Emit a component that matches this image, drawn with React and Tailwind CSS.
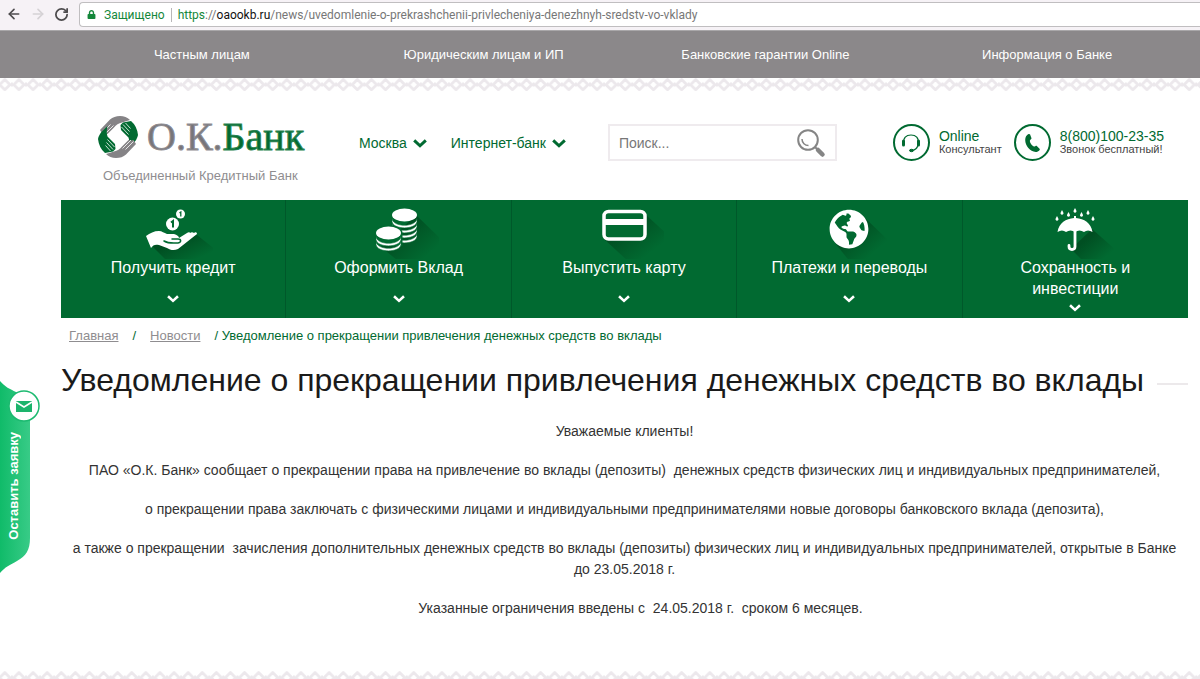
import React from 'react';
import { FaGlobeAmericas, FaLock } from 'react-icons/fa';
import { ArrowLeft, ArrowRight, RotateCw } from 'lucide-react';

const TOP_LINKS = ['Частным лицам', 'Юридическим лицам и ИП', 'Банковские гарантии Online', 'Информация о Банке'];

const Chevron = ({ className }) => (
    <svg viewBox="0 0 14 9" className={className} fill="none" stroke="currentColor" strokeWidth="3" aria-hidden="true">
        <path d="M1.2 1.4 7 6.8l5.8-5.4" />
    </svg>
);

const Ornament = ({ id, className }) => (
    <svg className={`block w-full ${className}`} aria-hidden="true">
        <defs>
            <pattern id={id} width="14.1" height="14" x="-2.2" patternUnits="userSpaceOnUse">
                <path d="M7.05 1.6 12.2 6.7l-5.150 5.1L1.900 6.7z" fill="none" stroke="#ece8ec" strokeWidth="2.800" strokeLinejoin="round" />
                <path d="M0 4.500v4M14.100 4.500v4" stroke="#ece8ec" strokeWidth="2" />
            </pattern>
        </defs>
        <rect width="100%" height="100%" fill={`url(#${id})`} />
    </svg>
);

const Shadow = ({ id, points }) => (
    <>
        <defs>
            <linearGradient id={id} x1="0" y1="0" x2="1" y2="1">
                <stop offset="0.3" stopColor="#00461d" stopOpacity="0.75" />
                <stop offset="0.75" stopColor="#00461d" stopOpacity="0" />
            </linearGradient>
        </defs>
        <polygon points={points} fill={`url(#${id})`} />
    </>
);

const HandIcon = () => (
    <svg viewBox="0 0 80 54" className="w-20 h-[54px]" aria-hidden="true">
        <Shadow id="sh-hand" points="19,41 64,30 84,46 70,60 38,60" />
        <path d="M13 31c4-3 8-5 13-5 3 0 5 2 8 3h7c3 1 5 2 5 4l8-5c1-1 3-1 3 0 1-1 3-1 4 0 1-1 3-1 3 1L45 44c-4 2-8 1-11-1l-8-3c-4-1-6 0-8 3z" fill="#fff" />
        <path d="M31 36c5 3 10 2 14 2 4-1 3-4 0-4h-6" fill="none" stroke="#016a31" strokeWidth="1.5" strokeLinecap="round" />
        <circle cx="39.500" cy="19" r="6.500" fill="#fff" />
        <path d="M38 17.500l2-1.500v6.500" fill="none" stroke="#016a31" strokeWidth="2" />
        <circle cx="47.500" cy="9" r="4.500" fill="#fff" />
        <path d="M46.500 8l1.300-1v4.500" fill="none" stroke="#016a31" strokeWidth="1.300" />
    </svg>
);

const CoinStack = ({ x, y, layers }) => (
    <g transform={`translate(${x} ${y})`}>
        {layers.map((dy) => (
            <path key={dy} d={`M-12.500 ${dy - 2.500}c1 9 24 9 25 0v3c-1 8.500-24 8.500-25 0z`} fill="#fff" stroke="#016a31" strokeWidth=".6" />
        ))}
        <ellipse rx="12.500" ry="6.500" fill="#fff" />
    </g>
);

const CoinsIcon = () => (
    <svg viewBox="0 0 80 54" className="w-20 h-[54px]" aria-hidden="true">
        <Shadow id="sh-coins" points="22,42 57,10 84,36 60,64 44,60" />
        <CoinStack x={45.5} y={10} layers={[6, 11, 16, 21]} />
        <ellipse cx="29.500" cy="28" rx="14" ry="8" fill="#016a31" />
        <path d="M15.500 28h28v13h-28z" fill="#016a31" />
        <CoinStack x={29.5} y={28} layers={[6, 11]} />
    </svg>
);

const CardIcon = () => (
    <svg viewBox="0 0 80 54" className="w-20 h-[54px]" aria-hidden="true">
        <Shadow id="sh-card" points="20,34 60,8 86,32 70,58 46,58" />
        <rect x="20" y="6.500" width="41" height="27.500" rx="4.500" fill="#016a31" stroke="#fff" strokeWidth="3.500" />
        <path d="M20 17h41" stroke="#fff" strokeWidth="6" />
    </svg>
);

const GlobeIcon = () => (
    <svg viewBox="0 0 80 54" className="w-20 h-[54px]" aria-hidden="true">
        <Shadow id="sh-globe" points="26,38 54,11 80,36 66,58 42,58" />
        <circle cx="40" cy="24" r="18.500" fill="#016a31" />
        <FaGlobeAmericas x="20" y="4" size={40} color="#fff" />
    </svg>
);

const DROPS = [[22, 12], [27, 6], [33.5, 8], [40, 4], [46.5, 8], [53, 6], [58, 12]];

const UmbrellaIcon = () => (
    <svg viewBox="0 0 80 54" className="w-20 h-[54px]" aria-hidden="true">
        <Shadow id="sh-umbrella" points="36,44 57,24 82,46 66,62 50,58" />
        {DROPS.map(([x, y]) => (
            <path key={x} d={`M${x} ${y - 1}l1.300 2.400a1.500 1.500 0 1 1-2.600 0z`} fill="#fff" />
        ))}
        <path d="M22.500 27C24 18 31 13.500 39 13v-2h2v2c8 .5 15 5 16.500 14-3-2-6-2-8.500 0-3-2-6-2-9 0-3-2-6-2-9 0-2.500-2-5.500-2-8.500 0z" fill="#fff" />
        <path d="M40 25v16.500c0 4-6 4-6 0v-1" fill="none" stroke="#fff" strokeWidth="2.800" strokeLinecap="round" />
    </svg>
);

const SERVICES = [
    { title: 'Получить кредит', Icon: HandIcon },
    { title: 'Оформить Вклад', Icon: CoinsIcon },
    { title: 'Выпустить карту', Icon: CardIcon },
    { title: 'Платежи и переводы', Icon: GlobeIcon },
    { title: 'Сохранность и инвестиции', Icon: UmbrellaIcon },
];

const BrowserBar = () => (
    <div className="flex h-[31px] items-start border-b border-[#a9a7a9] bg-[#f6f2f6] pt-[2px]">
        <div className="flex h-6 w-[79px] shrink-0 items-center gap-2 pl-[6px] text-[#4d4b4d]">
            <button aria-label="Назад"><ArrowLeft size={16} strokeWidth={2.5} /></button>
            <button aria-label="Вперёд" className="text-[#d5d2d5]"><ArrowRight size={16} strokeWidth={2.5} /></button>
            <button aria-label="Обновить"><RotateCw size={15} strokeWidth={2.8} /></button>
        </div>
        <div className="flex h-[25px] flex-1 items-center rounded-l-sm border border-r-0 border-[#c0bec0] bg-white pl-[7px] font-[Roboto,sans-serif] text-xs whitespace-nowrap">
            <FaLock className="mr-2 text-[#14873a]" size={9} />
            <span className="text-[#14873a]">Защищено</span>
            <span className="mx-[6px] h-[14px] w-px bg-[#b9b7b9]" />
            <span className="text-[#777]">
                <span className="text-[#14873a]">https</span>://<span className="text-[#111]">oaookb.ru</span>/news/uvedomlenie-o-prekrashchenii-privlecheniya-denezhnyh-sredstv-vo-vklady
            </span>
        </div>
    </div>
);

// one half of the emblem, the other half is the same shape turned by 180 degrees
const LogoHalf = () => (
    <>
        <path d="M3 14 13 3.500Q17 0 23 0q6 0 10 4l-8 2.500q-5 1-8 5L10.500 18 8 17.500 5.500 18z" fill="#858386" />
        <path d="M23.500 9 26 6.500 34 5q6 5 7 14-1 5-5 8.500L31.500 32q1.500-6 0-10.500L24 14z" fill="#016a31" />
        <path d="m5.500 16.500 8-8M8 18l8.500-8.500M24.500 11l7 7.500M26 8.500l6.500 7M28.500 7l5 5.500" stroke="#fff" strokeWidth=".8" />
    </>
);

const LogoMark = () => (
    <svg viewBox="0 0 42 42" className="size-[42px]" aria-hidden="true">
        <LogoHalf />
        <g transform="rotate(180 21 21)">
            <LogoHalf />
        </g>
    </svg>
);

const Logo = () => (
    <a href="#" className="block w-[210px]">
        <span className="flex items-center gap-2">
            <LogoMark />
            <span className="font-['Liberation_Serif',serif] text-[40px] leading-[42px] whitespace-nowrap text-[#77757a] [-webkit-text-stroke:1px_#8f8d92]">
                О.К.<span className="text-[#016a31] [-webkit-text-stroke:1px_#2a8350]">Банк</span>
            </span>
        </span>
        <span className="mt-2 block pl-[6px] text-[13px] leading-5 whitespace-nowrap text-[#8f8d90]">Объединенный Кредитный Банк</span>
    </a>
);

const Contact = ({ icon, title, note }) => (
    <a href="#" className="flex items-center gap-[9px] whitespace-nowrap">
        <span className="flex size-[37px] items-center justify-center rounded-full border-2 border-[#016a31] text-[#016a31]">{icon}</span>
        <span>
            <span className="block text-sm leading-[14px] text-[#016a31]">{title}</span>
            <span className="block text-[11px] leading-[13px] text-[#444]">{note}</span>
        </span>
    </a>
);

const HeadsetIcon = () => (
    <svg viewBox="0 0 20 20" className="size-5" fill="none" stroke="currentColor" aria-hidden="true">
        <path d="M3 10C2 5 5 2 10 2s8 3 7 8" strokeWidth="1.200" />
        <path d="M2.500 8v4M17.500 8v4" strokeWidth="3" strokeLinecap="round" />
        <path d="M17 12c-1 4-3 5-6 5.500" strokeWidth="1.200" />
        <ellipse cx="10.500" cy="17.500" rx="2" ry="1.200" fill="currentColor" />
    </svg>
);

const PhoneIcon = () => (
    <svg viewBox="0 0 20 20" className="size-5" fill="currentColor" aria-hidden="true">
        <path d="M6.500 1 8 1.300l1.500 4c0 1-1.700 1.700-1.700 2.700.4 2.500 2 4.500 4 5.600 1 .2 2-1 3-.7l3 3c.3 1-1.800 3-4 3C8 18.500 3.300 13 3.200 7 3.200 4 4.500 2 6.500 1z" />
    </svg>
);

const Header = () => (
    <header className="flex items-start pt-[25px] pr-6 pl-9">
        <Logo />
        <nav className="mt-2 ml-[52px] flex h-9 items-center gap-6 pt-[2px] text-sm text-[#016a31]">
            <button className="flex items-center gap-[6px]">Москва <Chevron className="w-[14px]" /></button>
            <button className="flex items-center gap-[6px] whitespace-nowrap">Интернет-банк <Chevron className="w-[14px]" /></button>
        </nav>
        <form className="mt-2 ml-[42px] flex h-[37px] w-[229px] items-center border-2 border-[#efebee] px-[9px]">
            <input type="search" aria-label="Поиск" placeholder="Поиск..." className="min-w-0 flex-1 text-sm outline-none placeholder:text-[#777]" />
            <button type="button" aria-label="Найти" className="text-[#858585]">
                <svg viewBox="0 0 30 30" className="size-[30px]" fill="none" stroke="currentColor">
                    <circle cx="12" cy="12" r="9.800" strokeWidth="2" />
                    <path d="M6 11c0 4 3 6.500 6.500 6.500" strokeWidth="1.500" />
                    <path d="m19 19 2 2" strokeWidth="2" />
                    <path d="m22 22 4.500 4.500" strokeWidth="4.500" strokeLinecap="round" />
                </svg>
            </button>
        </form>
        <div className="mt-2 ml-auto flex gap-3">
            <Contact icon={<HeadsetIcon />} title="Online" note="Консультант" />
            <Contact icon={<PhoneIcon />} title="8(800)100-23-35" note="Звонок бесплатный!" />
        </div>
    </header>
);

const ServiceNav = () => (
    <nav className="mt-[14px] grid grid-cols-5 divide-x divide-[#00582a] bg-[#016a31]">
        {SERVICES.map(({ title, Icon }) => (
            <a key={title} href="#" className="flex h-[118px] flex-col items-center overflow-hidden pt-[5px] text-center text-base leading-[21px] text-white">
                <span className="flex h-[52px] items-start"><Icon /></span>
                <span className="relative min-h-[33px] px-8">{title}</span>
                <Chevron className="mt-[5px] w-3" />
            </a>
        ))}
    </nav>
);

const RequestTab = () => (
    <button className="absolute top-[380px] left-0 h-[194px] w-10 text-white">
        <svg viewBox="0 0 40 194" className="absolute inset-0 size-full" aria-hidden="true">
            <defs>
                <linearGradient id="tab">
                    <stop offset="0" stopColor="#10bb69" />
                    <stop offset="1" stopColor="#38cb87" />
                </linearGradient>
            </defs>
            <path d="M0 1c5 6 10 8 16 11 9 5 14 10 14 20v126c0 12-4 18-13 23-7 4-12 6-17 12z" fill="url(#tab)" />
            <circle cx="24" cy="26" r="15" fill="#fff" stroke="#1cba70" strokeWidth="1.500" />
            <rect x="16" y="21" width="16" height="11" fill="#1cb46c" />
            <path d="m16 22 8 5 8-5" fill="none" stroke="#fff" strokeWidth="1.500" />
        </svg>
        <span className="absolute top-[52px] left-[5px] rotate-180 text-[13px] leading-[18px] font-bold whitespace-nowrap [writing-mode:vertical-rl]">Оставить заявку</span>
    </button>
);

const Article = () => (
    <main>
        <div className="flex items-center gap-[13px]">
            <h1 className="text-[32px] leading-[42px] whitespace-nowrap text-[#1a1a1a]">Уведомление о прекращении привлечения денежных средств во вклады</h1>
            <span className="mt-2 h-[2px] flex-1 bg-[#ece9eb]" />
        </div>
        <div className="mt-5 space-y-[18px] px-2 text-center text-sm leading-[21px] text-[#333]">
            <p>Уважаемые клиенты!</p>
            <p>ПАО «О.К. Банк» сообщает о прекращении права на привлечение во вклады (депозиты)&nbsp; денежных средств физических лиц и индивидуальных предпринимателей,</p>
            <p>о прекращении права заключать с физическими лицами и индивидуальными предпринимателями новые договоры банковского вклада (депозита),</p>
            <p>а также о прекращении&nbsp; зачисления дополнительных денежных средств во вклады (депозиты) физических лиц и индивидуальных предпринимателей, открытые в Банке до 23.05.2018 г.</p>
            <p className="pl-8">Указанные ограничения введены с&nbsp; 24.05.2018 г.&nbsp; сроком 6 месяцев.</p>
        </div>
    </main>
);

const App = () => (
    <div className="relative flex min-h-screen flex-col bg-white font-['Liberation_Sans',Arial,sans-serif]">
        <BrowserBar />
        <nav className="grid h-[47px] grid-cols-4 items-center bg-[#8b888a] pr-3 pl-[61px] text-center text-[13px] text-white">
            {TOP_LINKS.map((link) => (
                <a key={link} href="#">{link}</a>
            ))}
        </nav>
        <Ornament id="ornament-top" className="h-[13px]" />
        <div className="pr-3 pl-[61px]">
            <Header />
            <ServiceNav />
            <nav className="mt-2 flex h-5 items-center pl-2 text-[13px] text-[#016a31]">
                <a href="#" className="text-[#8f8d90] underline">Главная</a>
                <span className="mx-[14px]">/</span>
                <a href="#" className="text-[#8f8d90] underline">Новости</a>
                <span className="ml-[14px]">/ Уведомление о прекращении привлечения денежных средств во вклады</span>
            </nav>
            <div className="mt-[13px]">
                <Article />
            </div>
        </div>
        <footer className="mt-auto">
            <Ornament id="ornament-bottom" className="h-2" />
        </footer>
        <RequestTab />
    </div>
);

export default App;
